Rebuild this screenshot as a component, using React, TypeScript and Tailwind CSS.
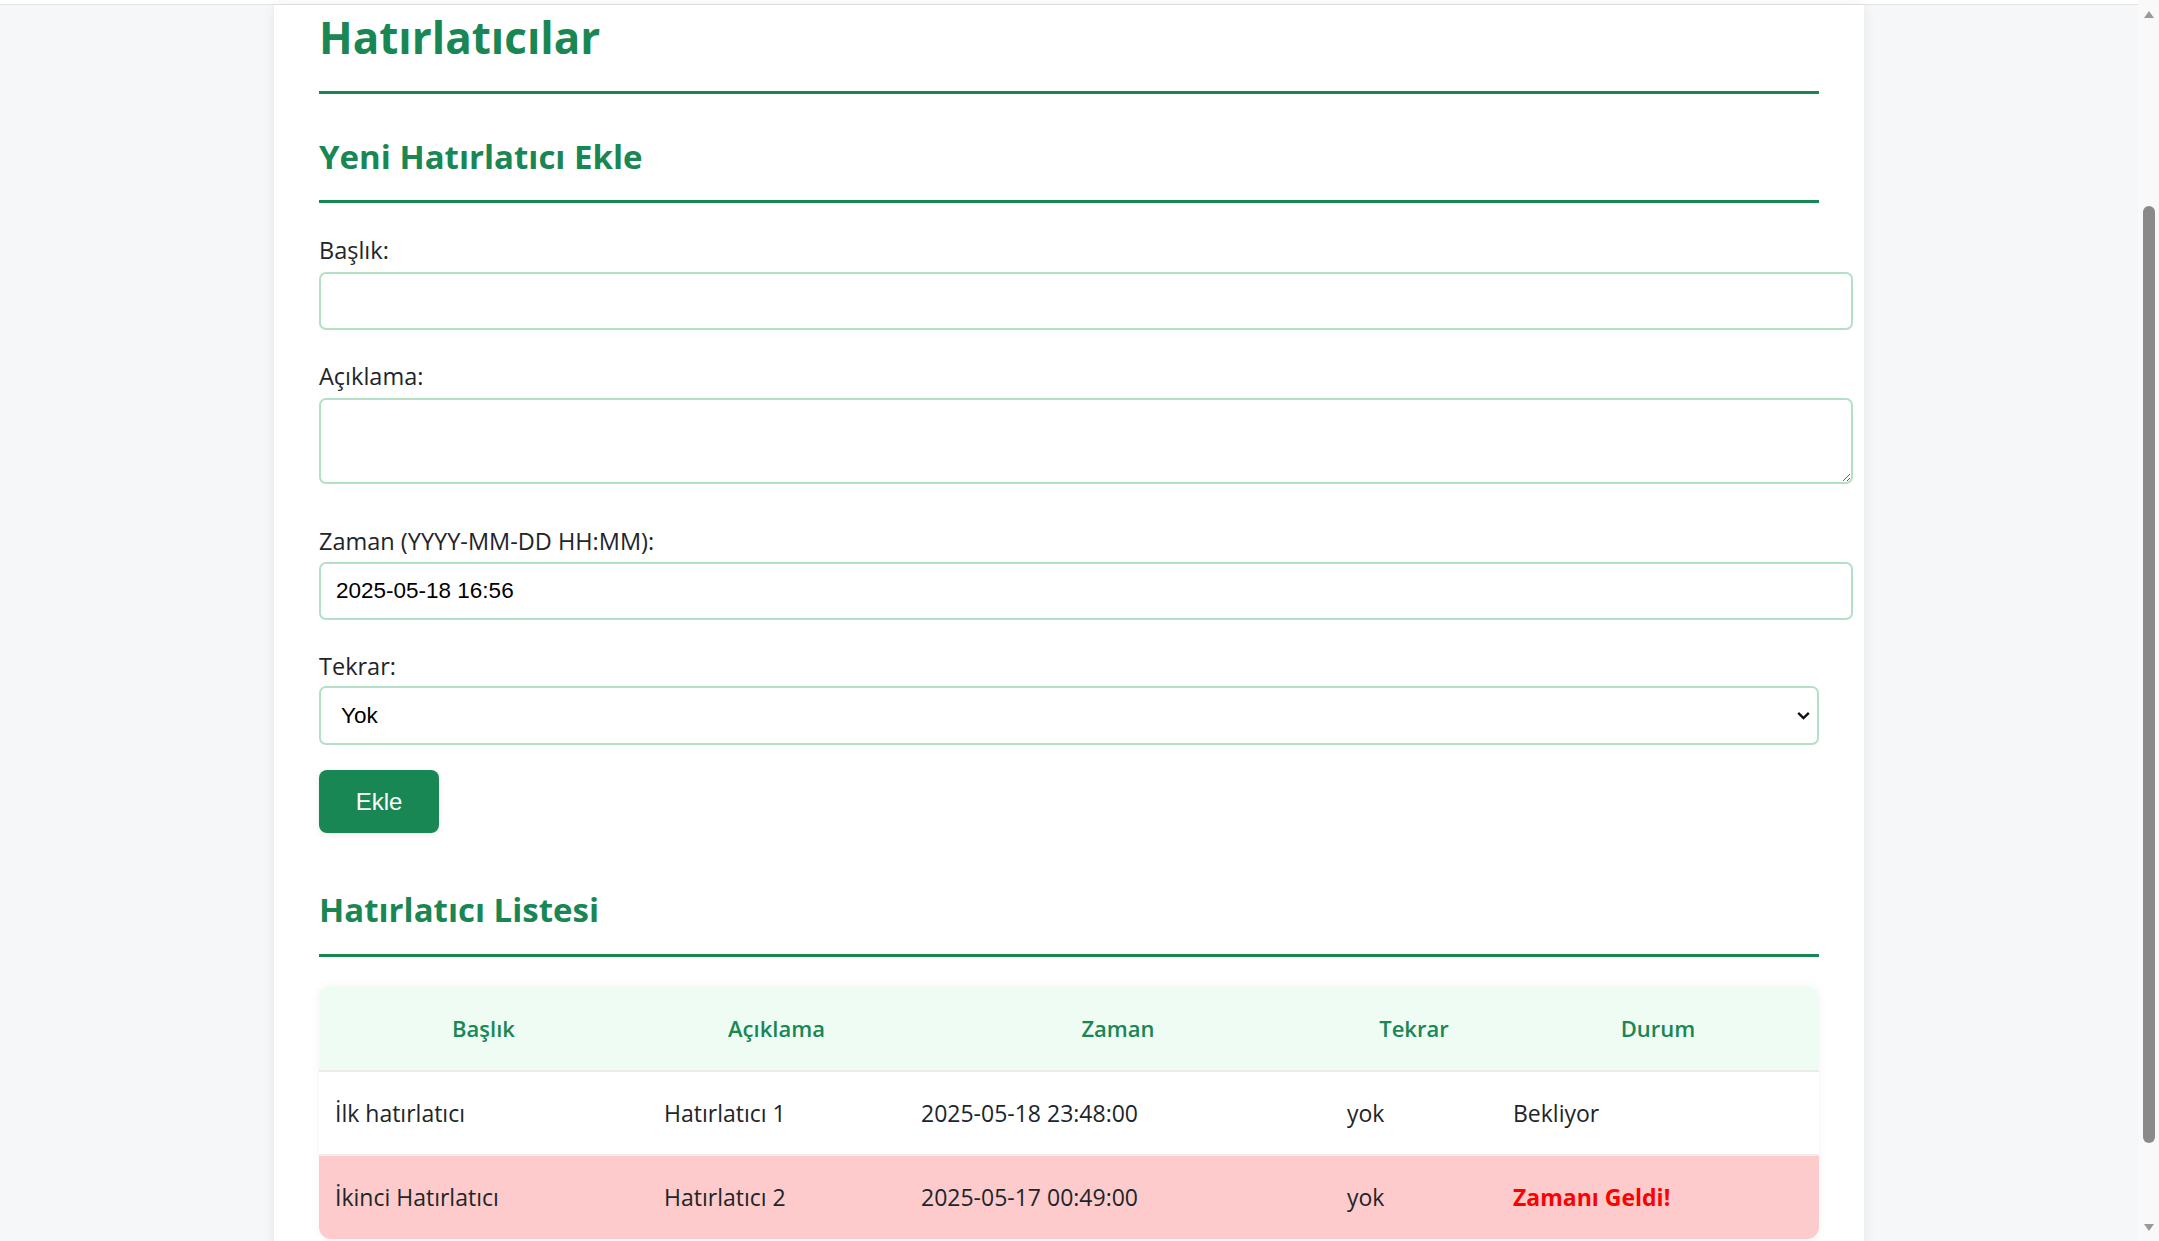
import React, { useState } from 'react'

type Reminder = {
    title: string
    desc: string
    time: string
    repeat: string
    due: boolean
}

const reminders: Reminder[] = [
    { title: "İlk hatırlatıcı", desc: "Hatırlatıcı 1", time: "2025-05-18 23:48:00", repeat: "yok", due: false },
    { title: "İkinci Hatırlatıcı", desc: "Hatırlatıcı 2", time: "2025-05-17 00:49:00", repeat: "yok", due: true },
]

const labelCls = "block text-[23.5px] leading-[30px] text-[#212529]"
const fieldCls = "box-content block w-full rounded-[7px] border-2 border-[#b3e0c6] bg-white px-[15px] text-[22.5px] text-black outline-none [font-family:'Liberation_Sans',Arial,sans-serif]"

// fake windows-ish scrollbar, the real one is hidden in headless
function ScrollBar() {
    return (
        <div className="flex w-[21px] shrink-0 flex-col items-center bg-[#f9f9f9]">
            <svg className="mt-[8px] h-[12px] w-[12px]" viewBox="0 0 12 12">
                <path d="M1 10h10L6 3z" fill="#9a9a9a" />
            </svg>
            <div className="mt-[186px] h-[937px] w-[12px] rounded-full bg-[#8a8a8a]" />
            <div className="flex-1" />
            <svg className="mb-[7px] h-[12px] w-[12px]" viewBox="0 0 12 12">
                <path d="M1 2h10L6 9z" fill="#9a9a9a" />
            </svg>
        </div>
    )
}

export default function App() {
    const [title, setTitle] = useState("")
    const [desc, setDesc] = useState("")
    const [time, setTime] = useState("2025-05-18 16:56")
    const [repeat, setRepeat] = useState("Yok")

    return (
        <div className="flex h-screen overflow-hidden bg-[#f6f7f9] [font-family:'Open_Sans','Noto_Sans',sans-serif]">
            <div className="min-w-0 flex-1 overflow-hidden">
                <div className="h-[5px] border-b border-[#e4e4e4] bg-white" />
                <div className="mx-auto w-[1590px] bg-white px-[45px] pt-[5px] pb-[300px] shadow-[0_0_12px_rgba(0,0,0,0.07)]">
                    <h1 className="border-b-[3px] border-[#198754] pb-[27px] text-[44px] font-bold leading-[54px] text-[#198754]">
                        Hatırlatıcılar
                    </h1>

                    <h2 className="mt-[43px] border-b-[3px] border-[#198754] pb-[23px] text-[33px] font-bold leading-[40px] text-[#198754]">
                        Yeni Hatırlatıcı Ekle
                    </h2>

                    <form onSubmit={(e) => e.preventDefault()}>
                        <label htmlFor="title" className={`${labelCls} mt-[32px]`}>Başlık:</label>
                        <input
                            id="title"
                            type="text"
                            value={title}
                            onChange={(e) => setTitle(e.target.value)}
                            className={`${fieldCls} mt-[7px] h-[54px]`}
                        />

                        <label htmlFor="desc" className={`${labelCls} mt-[31px]`}>Açıklama:</label>
                        <textarea
                            id="desc"
                            value={desc}
                            onChange={(e) => setDesc(e.target.value)}
                            className={`${fieldCls} mt-[7px] h-[82px] py-0`}
                        />

                        <label htmlFor="time" className={`${labelCls} mt-[42px]`}>Zaman (YYYY-MM-DD HH:MM):</label>
                        <input
                            id="time"
                            type="text"
                            value={time}
                            onChange={(e) => setTime(e.target.value)}
                            className={`${fieldCls} mt-[6px] h-[54px]`}
                        />

                        <label htmlFor="repeat" className={`${labelCls} mt-[31px]`}>Tekrar:</label>
                        <div className="relative mt-[5px]">
                            <select
                                id="repeat"
                                value={repeat}
                                onChange={(e) => setRepeat(e.target.value)}
                                className="block h-[59px] w-full appearance-none rounded-[7px] border-2 border-[#b3e0c6] bg-white pl-[20px] text-[22.5px] text-black outline-none [font-family:'Liberation_Sans',Arial,sans-serif]"
                            >
                                <option>Yok</option>
                                <option>Günlük</option>
                                <option>Haftalık</option>
                                <option>Aylık</option>
                            </select>
                            <svg className="pointer-events-none absolute right-[7px] top-[21px] h-[17px] w-[17px]" viewBox="0 0 16 16" fill="none">
                                <path d="M3 5.5l5 5 5-5" stroke="#111" strokeWidth="2.2" />
                            </svg>
                        </div>

                        <button
                            type="submit"
                            className="mt-[25px] h-[63px] w-[120px] rounded-[8px] bg-[#198754] text-[24px] text-white shadow-[0_2px_6px_rgba(0,0,0,0.08)] [font-family:'Liberation_Sans',Arial,sans-serif]"
                        >
                            Ekle
                        </button>
                    </form>

                    <h2 className="mt-[57px] border-b-[3px] border-[#198754] pb-[24px] text-[33px] font-bold leading-[40px] text-[#198754]">
                        Hatırlatıcı Listesi
                    </h2>

                    <div className="mt-[29px] overflow-hidden rounded-[12px] shadow-[0_0_10px_rgba(0,0,0,0.05)]">
                        <table className="w-full table-fixed border-collapse text-[23px]">
                            <colgroup>
                                <col className="w-[329px]" />
                                <col className="w-[257px]" />
                                <col className="w-[426px]" />
                                <col className="w-[166px]" />
                                <col className="w-[322px]" />
                            </colgroup>
                            <thead>
                                <tr className="h-[85px] border-b-2 border-[#e9ecea] bg-[#effcf4]">
                                    {["Başlık", "Açıklama", "Zaman", "Tekrar", "Durum"].map((h) => (
                                        <th key={h} className="px-[16px] text-center text-[22px] font-semibold text-[#198754]">{h}</th>
                                    ))}
                                </tr>
                            </thead>
                            <tbody>
                                {reminders.map((r, i) => (
                                    <tr
                                        key={i}
                                        className={`h-[84px] ${r.due ? "bg-[#fdcbcb]" : "border-b-2 border-[#eeeeee] bg-white"}`}
                                    >
                                        <td className="px-[16px] text-[#212529]">{r.title}</td>
                                        <td className="px-[16px] text-[#212529]">{r.desc}</td>
                                        <td className="px-[16px] text-[#212529]">{r.time}</td>
                                        <td className="px-[16px] text-[#212529]">{r.repeat}</td>
                                        <td className="px-[16px]">
                                            {r.due ? (
                                                <span className="font-bold text-[#ff0000]">Zamanı Geldi!</span>
                                            ) : (
                                                <span className="text-[#212529]">Bekliyor</span>
                                            )}
                                        </td>
                                    </tr>
                                ))}
                            </tbody>
                        </table>
                    </div>
                </div>
            </div>
            <ScrollBar />
        </div>
    )
}
